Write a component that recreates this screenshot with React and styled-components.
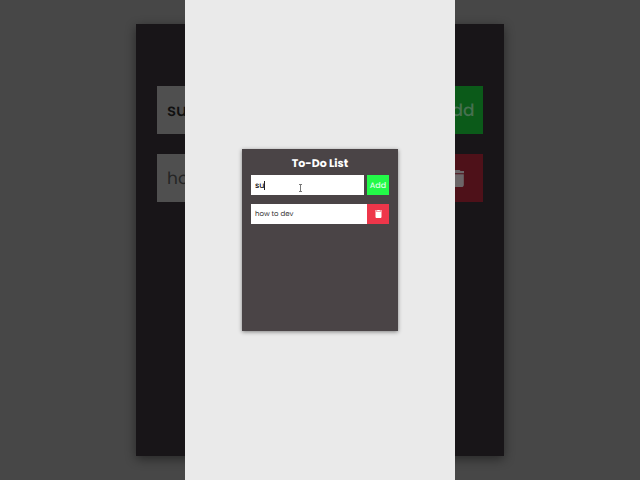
import React, { useState } from 'react'
import styled, { createGlobalStyle } from 'styled-components'

const sizes = {
  small: {
    width: 156, height: 182, pad: 9, top: 6, title: 11, titleLine: 16, titleGap: 4,
    row: 20, button: 22, gap: 3, rowGap: 9, text: 7, typed: 8, indent: 4, drop: 2, icon: 8,
  },
  large: {
    width: 368, height: 432, pad: 21, top: 14, title: 26, titleLine: 38, titleGap: 10,
    row: 48, button: 52, gap: 6, rowGap: 20, text: 17, typed: 17, indent: 10, drop: 0, icon: 17,
  },
}

const light = {
  card: '#4a4446',
  field: '#ffffff',
  typed: '#151515',
  item: '#333333',
  add: '#23f948',
  remove: '#ee364a',
  label: '#dcffe2',
  icon: '#ffffff',
  shadow: '0 1px 4px rgba(0, 0, 0, 0.45)',
}

const dark = {
  card: '#181518',
  field: '#4f4f4f',
  typed: '#101010',
  item: '#252525',
  add: '#0b5a19',
  remove: '#4e1119',
  label: '#467050',
  icon: '#6c6668',
  shadow: '0 3px 10px rgba(0, 0, 0, 0.45)',
}

const TrashIcon = () => (
  <svg viewBox="0 0 14 16" aria-hidden="true">
    <path fill="currentColor" d="M0 1h4l1-1h4l1 1h4v2H0zM1 4h12v10c0 1-1 2-2 2H3c-1 0-2-1-2-2z" />
  </svg>
)

const TodoCard = ({ size, colors, showCursor, id }) => {
  const [task, setTask] = useState('su')
  const s = sizes[size]

  return (
    <Card $s={s} $c={colors}>
      <Title $s={s}>To-Do List</Title>
      <Form $s={s} onSubmit={(e) => e.preventDefault()}>
        <Field>
          <Input
            id={id}
            aria-label="New task"
            autoComplete="off"
            value={task}
            onChange={(e) => setTask(e.target.value)}
            $s={s}
            $c={colors}
          />
          {showCursor && <Caret />}
          {showCursor && (
            <Pointer viewBox="0 0 5 8" aria-hidden="true">
              <path d="M1 .5h3M2.500 1v6M1 7.500h3" fill="none" stroke="#777" />
            </Pointer>
          )}
        </Field>
        <AddButton type="submit" $s={s} $c={colors}>Add</AddButton>
      </Form>
      <List>
        <Item $s={s} $c={colors}>
          <ItemText $s={s}>how to dev</ItemText>
          <RemoveButton type="button" aria-label="Remove task" $s={s} $c={colors}>
            <TrashIcon />
          </RemoveButton>
        </Item>
      </List>
    </Card>
  )
}

const App = () => {
  return (
    <Stage>
      <GlobalStyle />
      <Backdrop inert>
        <TodoCard id="backdrop-task" size="large" colors={dark} />
      </Backdrop>
      <Screen>
        <TodoCard id="task" size="small" colors={light} showCursor />
      </Screen>
    </Stage>
  )
}

export default App

const GlobalStyle = createGlobalStyle`
  * {
    box-sizing: border-box;
  }

  body {
    margin: 0;
    background: #474747;
    font-family: Poppins, Inter, sans-serif;
    text-rendering: geometricPrecision;
  }

  input, button {
    font-family: inherit;
    text-rendering: inherit;
    border: 0;
    border-radius: 0;
    margin: 0;
    padding: 0;
  }
`

/* both layers share the one grid cell */
const Stage = styled.div`
  display: grid;
  grid-template: minmax(100vh, auto) / 100%;
  justify-items: center;
`

const Backdrop = styled.div`
  grid-area: 1 / 1;
  width: 100%;
  display: flex;
  align-items: center;
  justify-content: center;
  background: #474747;
`

const Screen = styled.main`
  grid-area: 1 / 1;
  z-index: 1;
  height: 100%;
  aspect-ratio: 9 / 16;
  display: flex;
  align-items: center;
  justify-content: center;
  background: #eaeaea;
`

const Card = styled.section`
  width: ${({ $s }) => $s.width}px;
  min-height: ${({ $s }) => $s.height}px;
  padding: ${({ $s }) => `${$s.top}px ${$s.pad}px`};
  background: ${({ $c }) => $c.card};
  box-shadow: ${({ $c }) => $c.shadow};
`

const Title = styled.h1`
  margin: 0 0 ${({ $s }) => $s.titleGap}px;
  font-size: ${({ $s }) => $s.title}px;
  line-height: ${({ $s }) => $s.titleLine}px;
  font-weight: 700;
  text-align: center;
  color: #fff;
`

const Form = styled.form`
  display: flex;
  gap: ${({ $s }) => $s.gap}px;
  margin-bottom: ${({ $s }) => $s.rowGap}px;
`

const Field = styled.div`
  position: relative;
  flex: 1;
  display: flex;
`

const Input = styled.input`
  width: 100%;
  min-width: 0;
  height: ${({ $s }) => $s.row}px;
  padding: ${({ $s }) => `${$s.drop}px ${$s.indent}px 0`};
  font-size: ${({ $s }) => $s.typed}px;
  font-weight: 500;
  color: ${({ $c }) => $c.typed};
  background: ${({ $c }) => $c.field};
  outline: none;
`

const Caret = styled.span`
  position: absolute;
  left: 13px;
  top: 6px;
  width: 1px;
  height: 9px;
  background: #222;
`

const Pointer = styled.svg`
  position: absolute;
  left: 47px;
  top: 9px;
  width: 5px;
  height: 8px;
`

const AddButton = styled.button`
  width: ${({ $s }) => $s.button}px;
  height: ${({ $s }) => $s.row}px;
  padding-top: ${({ $s }) => $s.drop}px;
  font-size: ${({ $s }) => $s.typed}px;
  font-weight: 500;
  color: ${({ $c }) => $c.label};
  background: ${({ $c }) => $c.add};
`

const List = styled.ul`
  list-style: none;
  margin: 0;
  padding: 0;
`

const Item = styled.li`
  display: flex;
  align-items: center;
  height: ${({ $s }) => $s.row}px;
  color: ${({ $c }) => $c.item};
  background: ${({ $c }) => $c.field};
`

const ItemText = styled.span`
  flex: 1;
  padding: ${({ $s }) => `${$s.drop}px 0 0 ${$s.indent}px`};
  font-size: ${({ $s }) => $s.text}px;
`

const RemoveButton = styled.button`
  display: flex;
  align-items: center;
  justify-content: center;
  width: ${({ $s }) => $s.button}px;
  height: 100%;
  color: ${({ $c }) => $c.icon};
  background: ${({ $c }) => $c.remove};

  svg {
    height: ${({ $s }) => $s.icon}px;
  }
`
